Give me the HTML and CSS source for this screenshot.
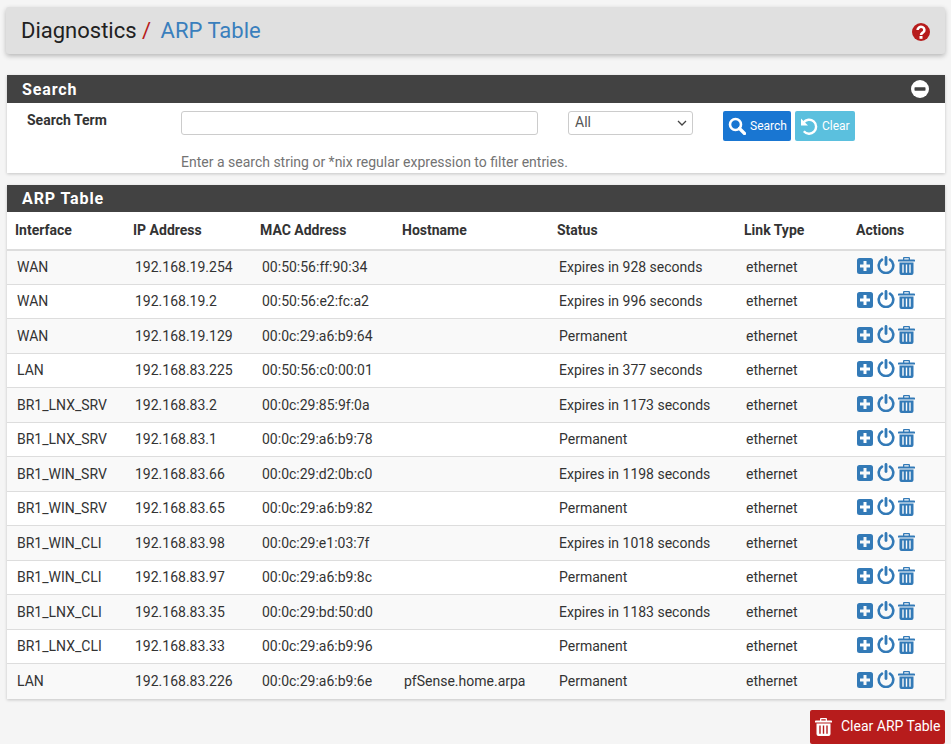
FILE: index.html
```html
<!DOCTYPE html>
<html>
<head>
  <meta http-equiv="Content-Type" content="text/html; charset=utf-8" />
  <title>Diagnostics: ARP Table</title>
<link rel="stylesheet" href="styles.css">
</head>
<body>

<svg class="defs" width="0" height="0">
  <symbol id="i-plus" viewBox="0 0 16 16">
    <path fill-rule="evenodd" d="M2.5 0h11A2.5 2.5 0 0 1 16 2.5v11a2.5 2.5 0 0 1-2.5 2.5h-11A2.5 2.5 0 0 1 0 13.500v-11A2.500 2.500 0 0 1 2.500 0zM6.500 3v3.500H3v3h3.500V13h3V9.500H13v-3H9.500V3z"/>
  </symbol>
  <symbol id="i-power" viewBox="0 0 18 18">
    <path fill="none" stroke="currentColor" stroke-width="2.600" stroke-linecap="round" d="M5 3.600a7.300 7.300 0 1 0 8 0"/>
    <path fill="none" stroke="currentColor" stroke-width="2.800" stroke-linecap="round" d="M9 1.500v7"/>
  </symbol>
  <symbol id="i-trash" viewBox="0 0 17 18">
    <path fill-rule="evenodd" d="M6 0h5a1 1 0 0 1 1 1v1.500h4.200a.8.8 0 0 1 .8.8V4.500H0V3.300a.8.8 0 0 1 .8-.8H5V1a1 1 0 0 1 1-1zM6.300 1.200v1.300h4.400V1.200zM1.500 5.500h14V16a2 2 0 0 1-2 2h-10a2 2 0 0 1-2-2zM4.300 7.500v8.300h1.400V7.500zM7.800 7.500v8.300h1.400V7.500zM11.300 7.500v8.300h1.400V7.500z"/>
  </symbol>
</svg>

<header class="page-title">
  <h1>Diagnostics <span class="sep">/</span> <a href="#">ARP Table</a></h1>
  <svg class="help" viewBox="0 0 18 18" width="18" height="18">
    <circle cx="9" cy="9" r="9" fill="#b71c1c"/>
    <path fill="none" stroke="#fff" stroke-width="2.600" d="M5.600 7a3.400 3.100 0 1 1 5.300 2.500C9.800 10.300 9 10.800 9 12"/>
    <rect x="7.500" y="13" width="3" height="2.800" fill="#fff"/>
  </svg>
</header>

<section class="panel">
  <div class="panel-heading">
    <h2>Search</h2>
    <svg class="collapse" viewBox="0 0 18 18" width="18" height="18">
      <circle cx="9" cy="9" r="9" fill="#fff"/>
      <rect x="3.500" y="7.300" width="11" height="3.400" rx=".6" fill="#424242"/>
    </svg>
  </div>
  <form class="search-form">
    <label class="search-label">Search Term</label>
    <input class="search-input" type="text">
    <select class="search-select"><option>All</option></select>
    <div class="search-buttons">
      <button type="button" class="btn btn-search">
        <svg viewBox="0 0 18 18" width="18" height="18"><circle cx="7.500" cy="7.500" r="5.500" fill="none" stroke="#fff" stroke-width="2.600"/><path d="M11.500 11.500l5 5" stroke="#fff" stroke-width="3.200" stroke-linecap="round"/></svg>
        Search
      </button>
      <button type="button" class="btn btn-clear">
        <svg viewBox="0 0 18 18" width="18" height="18"><path fill="none" stroke="#fff" stroke-width="2.400" d="M3.500 5.500a7 7 0 1 1 .3 8.800"/><path fill="#fff" d="M1 1.500l7 7H1z"/></svg>
        Clear
      </button>
    </div>
    <p class="search-help">Enter a search string or *nix regular expression to filter entries.</p>
  </form>
</section>

<section class="panel panel-table">
  <div class="panel-heading">
    <h2>ARP Table</h2>
  </div>
  <table>
    <colgroup>
      <col class="c-if"><col class="c-ip"><col class="c-mac"><col class="c-host"><col class="c-status"><col class="c-link"><col>
    </colgroup>
    <thead>
      <tr>
        <th>Interface</th>
        <th>IP Address</th>
        <th>MAC Address</th>
        <th>Hostname</th>
        <th>Status</th>
        <th>Link Type</th>
        <th>Actions</th>
      </tr>
    </thead>
    <tbody id="rows"></tbody>
  </table>
</section>

<div class="page-actions">
  <button type="button" class="btn btn-danger">
    <svg width="17" height="20"><use href="#i-trash"/></svg>
    Clear ARP Table
  </button>
</div>

<script>
var data = [
  ['WAN', '192.168.19.254', '00:50:56:ff:90:34', '', 'Expires in 928 seconds'],
  ['WAN', '192.168.19.2', '00:50:56:e2:fc:a2', '', 'Expires in 996 seconds'],
  ['WAN', '192.168.19.129', '00:0c:29:a6:b9:64', '', 'Permanent'],
  ['LAN', '192.168.83.225', '00:50:56:c0:00:01', '', 'Expires in 377 seconds'],
  ['BR1_LNX_SRV', '192.168.83.2', '00:0c:29:85:9f:0a', '', 'Expires in 1173 seconds'],
  ['BR1_LNX_SRV', '192.168.83.1', '00:0c:29:a6:b9:78', '', 'Permanent'],
  ['BR1_WIN_SRV', '192.168.83.66', '00:0c:29:d2:0b:c0', '', 'Expires in 1198 seconds'],
  ['BR1_WIN_SRV', '192.168.83.65', '00:0c:29:a6:b9:82', '', 'Permanent'],
  ['BR1_WIN_CLI', '192.168.83.98', '00:0c:29:e1:03:7f', '', 'Expires in 1018 seconds'],
  ['BR1_WIN_CLI', '192.168.83.97', '00:0c:29:a6:b9:8c', '', 'Permanent'],
  ['BR1_LNX_CLI', '192.168.83.35', '00:0c:29:bd:50:d0', '', 'Expires in 1183 seconds'],
  ['BR1_LNX_CLI', '192.168.83.33', '00:0c:29:a6:b9:96', '', 'Permanent'],
  ['LAN', '192.168.83.226', '00:0c:29:a6:b9:6e', 'pfSense.home.arpa', 'Permanent']
];
var icons = '<svg class="a-plus"><use href="#i-plus"/></svg>' +
  '<svg class="a-power"><use href="#i-power"/></svg>' +
  '<svg class="a-trash"><use href="#i-trash"/></svg>';
var tb = document.getElementById('rows');
for (var i = 0; i < data.length; ++i) {
  var row = tb.insertRow(-1);
  for (var j = 0; j < data[i].length; ++j) {
    row.insertCell(j).appendChild(document.createTextNode(data[i][j]));
  }
  row.insertCell(-1).appendChild(document.createTextNode('ethernet'));
  var col = row.insertCell(-1);
  col.className = 'actions';
  col.innerHTML = icons;
}
</script>
</body>
</html>
```

FILE: styles.css
```css
body {
  margin: 0;
  padding: 7px 6px 0 7px;
  background-color: #f5f5f5;
  font-family: Roboto, "Liberation Sans", sans-serif;
  font-size: 14px;
  color: #212121;
}
.defs {
  position: absolute;
}

.page-title {
  display: flex;
  justify-content: space-between;
  align-items: center;
  height: 47px;
  margin: 0 0 21px -1px;
  padding: 0 15px 0 15px;
  box-sizing: border-box;
  background-color: #e0e0e0;
  border-radius: 3px;
  box-shadow: 0 2px 5px rgba(0,0,0,.26);
}
.page-title h1 {
  margin: 0;
  font-size: 22px;
  font-weight: 400;
  white-space: pre-wrap;
}
.page-title a {
  margin-left: 4px;
  color: #3a7fbd;
  text-decoration: none;
}
.sep {
  color: #b71c1c;
}
.help {
  margin-top: 2px;
}

.panel {
  background-color: #fff;
  box-shadow: 0 1px 3px rgba(0,0,0,.2);
  margin-bottom: 12px;
}
.panel-heading {
  display: flex;
  justify-content: space-between;
  align-items: center;
  height: 28px;
  padding: 0 16px 0 15px;
  background-color: #424242;
  color: #fff;
}
.panel-heading h2 {
  margin: 0;
  font-size: 16px;
  font-weight: 700;
  letter-spacing: .9px;
}
.panel-table {
  margin-bottom: 11px;
}
.panel-table .panel-heading {
  height: 27px;
}

.search-form {
  display: grid;
  grid-template-columns: 174px 387px 155px auto;
  grid-template-rows: 30px auto;
  height: 70px;
  box-sizing: border-box;
  padding: 8px 0 0 0;
  align-items: start;
}
.search-label {
  padding: 1px 0 0 20px;
  font-weight: 700;
  color: #333;
}
.search-input {
  width: 357px;
  height: 24px;
  box-sizing: border-box;
  border: 1px solid #ccc;
  border-radius: 3px;
  background-color: #fff;
}
.search-select {
  appearance: none;
  width: 125px;
  height: 24px;
  box-sizing: border-box;
  padding: 0 0 2px 6px;
  border: 1px solid #ccc;
  border-radius: 3px;
  background: #fff url("data:image/svg+xml,%3Csvg xmlns='http://www.w3.org/2000/svg' width='10' height='6'%3E%3Cpath d='M1 1l4 4 4-4' fill='none' stroke='%23444' stroke-width='1.300'/%3E%3C/svg%3E") no-repeat right 5px center;
  color: #555;
  font-family: Roboto, sans-serif;
  font-size: 14px;
}
.search-buttons {
  display: flex;
  gap: 4px;
}
.search-help {
  grid-column: 2 / 5;
  margin: 13px 0 0 0;
  color: #737373;
}

.btn {
  display: inline-flex;
  align-items: center;
  border: 0;
  border-radius: 2px;
  color: #fff;
  font-family: Roboto, sans-serif;
}
.btn-search, .btn-clear {
  height: 30px;
  padding: 0 4px 0 5px;
  gap: 4px;
  font-size: 12px;
}
.btn-search {
  width: 68px;
  background-color: #1976d2;
}
.btn-clear {
  width: 60px;
  background-color: #5bc0de;
}
.btn-danger {
  width: 135px;
  height: 34px;
  padding: 0 0 2px 5px;
  gap: 9px;
  background-color: #b71c1c;
  font-size: 14px;
  white-space: nowrap;
}
.btn-danger svg {
  fill: #fff;
  margin-top: 2px;
}

table {
  width: 100%;
  border-collapse: collapse;
  table-layout: fixed;
}
.c-if { width: 118px; }
.c-ip { width: 127px; }
.c-mac { width: 142px; }
.c-host { width: 155px; }
.c-status { width: 187px; }
.c-link { width: 112px; }

th {
  height: 36.500px;
  padding: 0 0 0 8px;
  text-align: left;
  font-weight: 700;
  color: #333;
  border-bottom: 2px solid #ddd;
}
td {
  height: 34.500px;
  box-sizing: border-box;
  padding: 0 0 0 10px;
  color: #333;
  border-bottom: 1px solid #ddd;
  white-space: nowrap;
}
tbody tr:nth-child(odd) {
  background-color: #f9f9f9;
}
tbody tr:last-child td {
  height: 35px;
  border-bottom: 0;
}
.actions {
  padding-left: 9px;
  padding-bottom: 2px;
  line-height: 0;
  color: #337ab7;
  fill: #337ab7;
}
.actions svg {
  vertical-align: middle;
}
.a-plus { width: 16px; height: 16px; }
.a-power { width: 18px; height: 18px; margin-left: 4px; margin-top: -2px; }
.a-trash { width: 17px; height: 18px; margin-left: 3px; }

.page-actions {
  display: flex;
  justify-content: flex-end;
  margin-right: 0;
}
```
